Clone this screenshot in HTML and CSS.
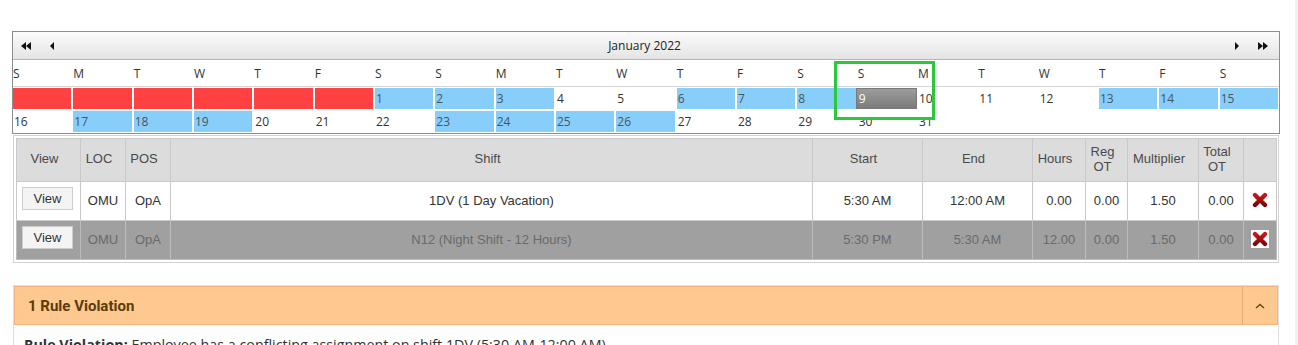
FILE: index.html
```html
<!DOCTYPE html>
<html>
<head>
<meta charset="utf-8">
<title>Schedule</title>
<link rel="stylesheet" href="styles.css">
</head>
<body>
<div class="page">
  <div class="cal">
    <div class="cal-head">
      <div class="nav nav-left">
        <span class="nav-btn"><svg width="11" height="8" viewBox="0 0 11 8"><polygon points="5,0 0,4 5,8"/><polygon points="10,0 5,4 10,8"/></svg></span>
        <span class="nav-btn"><svg width="5" height="8" viewBox="0 0 5 8"><polygon points="4,0 0,4 4,8"/></svg></span>
      </div>
      <div class="cal-title">January 2022</div>
      <div class="nav nav-right">
        <span class="nav-btn"><svg width="5" height="8" viewBox="0 0 5 8"><polygon points="1,0 5,4 1,8"/></svg></span>
        <span class="nav-btn"><svg width="11" height="8" viewBox="0 0 11 8"><polygon points="1,0 6,4 1,8"/><polygon points="6,0 11,4 6,8"/></svg></span>
      </div>
    </div>
    <div class="dow">
      <div>S</div><div>M</div><div>T</div><div>W</div><div>T</div><div>F</div><div>S</div>
      <div>S</div><div>M</div><div>T</div><div>W</div><div>T</div><div>F</div><div>S</div>
      <div>S</div><div>M</div><div>T</div><div>W</div><div>T</div><div>F</div><div>S</div>
    </div>
    <div class="days">
      <div class="day off"></div><div class="day off"></div><div class="day off"></div><div class="day off"></div><div class="day off"></div><div class="day off"></div>
      <div class="day sched">1</div><div class="day sched">2</div><div class="day sched">3</div>
      <div class="day">4</div><div class="day">5</div>
      <div class="day sched">6</div><div class="day sched">7</div><div class="day sched">8</div>
      <div class="day sel">9</div>
      <div class="day">10</div><div class="day">11</div><div class="day">12</div>
      <div class="day sched">13</div><div class="day sched">14</div><div class="day sched">15</div>
      <div class="day">16</div>
      <div class="day sched">17</div><div class="day sched">18</div><div class="day sched">19</div>
      <div class="day">20</div><div class="day">21</div><div class="day">22</div>
      <div class="day sched">23</div><div class="day sched">24</div><div class="day sched">25</div><div class="day sched">26</div>
      <div class="day">27</div><div class="day">28</div><div class="day">29</div><div class="day">30</div><div class="day">31</div>
      <div class="day"></div><div class="day"></div><div class="day"></div><div class="day"></div><div class="day"></div>
    </div>
    <div class="highlight"></div>
  </div>

  <div class="grid-wrap">
    <table class="grid">
      <colgroup>
        <col class="c-view"><col class="c-loc"><col class="c-pos"><col class="c-shift"><col class="c-start"><col class="c-end"><col class="c-hours"><col class="c-reg"><col class="c-mult"><col class="c-total"><col class="c-del">
      </colgroup>
      <thead>
        <tr class="head">
          <th>View</th><th>LOC</th><th>POS</th><th>Shift</th><th>Start</th><th>End</th><th>Hours</th><th>Reg<br>OT</th><th>Multiplier</th><th>Total<br>OT</th><th></th>
        </tr>
      </thead>
      <tbody>
        <tr class="row">
          <td><button class="btn">View</button></td><td>OMU</td><td>OpA</td><td>1DV (1 Day Vacation)</td><td>5:30 AM</td><td>12:00 AM</td><td>0.00</td><td>0.00</td><td>1.50</td><td>0.00</td>
          <td><span class="del"><svg width="16" height="16" viewBox="0 0 16 16"><defs><linearGradient id="xg1" x1="0" y1="0" x2="0" y2="1"><stop offset="0" stop-color="#c81818"/><stop offset="1" stop-color="#7c0808"/></linearGradient></defs><path d="M3 3 L13 13 M13 3 L3 13" stroke="url(#xg1)" stroke-width="4.4" stroke-linecap="round"/></svg></span></td>
        </tr>
        <tr class="row alt">
          <td><button class="btn">View</button></td><td>OMU</td><td>OpA</td><td>N12 (Night Shift - 12 Hours)</td><td>5:30 PM</td><td>5:30 AM</td><td>12.00</td><td>0.00</td><td>1.50</td><td>0.00</td>
          <td><span class="del boxed"><svg width="16" height="16" viewBox="0 0 16 16"><defs><linearGradient id="xg2" x1="0" y1="0" x2="0" y2="1"><stop offset="0" stop-color="#c81818"/><stop offset="1" stop-color="#7c0808"/></linearGradient></defs><path d="M3 3 L13 13 M13 3 L3 13" stroke="url(#xg2)" stroke-width="4.4" stroke-linecap="round"/></svg></span></td>
        </tr>
      </tbody>
    </table>
  </div>

  <div class="panel">
    <div class="panel-head">
      <div class="panel-title">1 Rule Violation</div>
      <div class="panel-toggle"><svg width="10" height="6" viewBox="0 0 10 6"><path d="M1 5 L5 1.5 L9 5" fill="none" stroke="#6b4a12" stroke-width="1.6"/></svg></div>
    </div>
    <div class="panel-body"><b>Rule Violation:</b> Employee has a conflicting assignment on shift 1DV (5:30 AM-12:00 AM)</div>
  </div>
</div>
</body>
</html>
```

FILE: styles.css
```css
html, body {
  margin: 0;
  padding: 0;
  overflow: hidden;
  background: #ffffff;
}

.page {
  height: 345px;
  box-sizing: border-box;
  padding-top: 31px;
  border-right: 3px solid #f1f1f1;
  overflow: hidden;
}

/* ---------- calendar ---------- */
.cal {
  position: relative;
  margin-left: 12px;
  width: 1268px;
  box-sizing: border-box;
  border: 1px solid #8d8d8d;
  font-family: "Open Sans", "DejaVu Sans", sans-serif;
  font-size: 12px;
  color: #333333;
}

.cal-head {
  height: 27px;
  display: flex;
  align-items: center;
  padding: 0 11px 0 8px;
  background: linear-gradient(#fcfcfc, #e4e4e4);
  border-bottom: 1px solid #b4b4b4;
}

.nav {
  flex: 1;
  display: flex;
  align-items: center;
  gap: 18px;
}

.nav-right {
  justify-content: flex-end;
}

.nav-btn {
  display: flex;
  align-items: center;
}

.nav-btn svg {
  display: block;
  fill: #111111;
}

.cal-title {
  color: #222222;
}

.dow {
  display: grid;
  grid-template-columns: repeat(21, 1fr);
  column-gap: 2px;
  padding-right: 1px;
  height: 26px;
  align-items: center;
  border-bottom: 1px solid #d4d4d4;
}

.days {
  display: grid;
  grid-template-columns: repeat(21, 1fr);
  grid-auto-rows: 21px;
  column-gap: 2px;
  row-gap: 2px;
  padding: 1px 1px 1px 0;
}

.day {
  line-height: 21px;
  padding-left: 1px;
  color: #333333;
}

.day.off {
  background: #ff4141;
}

.day.sched {
  background: #87cefa;
  color: #4a5560;
}

.day.sel {
  margin: 0 -1px 0 -2px;
  padding-left: 2px;
  background: linear-gradient(#9c9c9c, #7b7b7b);
  border: 1px solid #7a7a7a;
  box-sizing: border-box;
  line-height: 19px;
  color: #ffffff;
}

.highlight {
  position: absolute;
  left: 821px;
  top: 29px;
  width: 101px;
  height: 59px;
  box-sizing: border-box;
  border: 3px solid #2cc83c;
  pointer-events: none;
}

/* ---------- grid ---------- */
.grid-wrap {
  margin: 1px 0 0 13px;
  width: 1266px;
  box-sizing: border-box;
  border: 1px solid #d2d2d2;
  padding: 2px;
}

.grid {
  width: 1260px;
  table-layout: fixed;
  border-collapse: collapse;
  font-family: "Liberation Sans", Arial, sans-serif;
  font-size: 13px;
  color: #333333;
}

.c-view { width: 64px; }
.c-loc { width: 45px; }
.c-pos { width: 45px; }
.c-shift { width: 642px; }
.c-start { width: 110px; }
.c-end { width: 110px; }
.c-hours { width: 53px; }
.c-reg { width: 42px; }
.c-mult { width: 71px; }
.c-total { width: 45px; }
.c-del { width: 33px; }

.grid th,
.grid td {
  border: 1px solid #c9c9c9;
  padding: 0;
  text-align: center;
  vertical-align: middle;
}

.grid td {
  padding-bottom: 2px;
}

.grid tr.head {
  height: 43px;
}

.grid th {
  background: #dcdcdc;
  color: #4a4a4a;
  font-weight: normal;
  line-height: 15px;
  padding: 0 12px 3px 4px;
}

.grid tr.row {
  height: 39px;
}

.grid tr.alt td {
  background: #a0a0a0;
  color: #6a6a6a;
  border-color: #bcbcbc;
}

.btn {
  display: block;
  margin: 0 auto;
  width: 51px;
  height: 23px;
  padding: 0;
  border: 1px solid #cdcdcd;
  background: #f4f4f4;
  font-family: "Liberation Sans", Arial, sans-serif;
  font-size: 13px;
  color: #333333;
  position: relative;
  left: -1px;
  top: -2px;
}

.del {
  display: inline-flex;
  width: 18px;
  height: 18px;
  align-items: center;
  justify-content: center;
  vertical-align: middle;
}

.del.boxed {
  background: #ffffff;
}

.del svg {
  display: block;
}

/* ---------- panel ---------- */
.panel {
  margin: 22px 0 0 13px;
  width: 1266px;
  box-sizing: border-box;
  border: 1px solid #dedede;
}

.panel-head {
  display: flex;
  height: 39px;
  box-sizing: border-box;
  background: #fec990;
  border: 1px solid #f3b383;
}

.panel-title {
  flex: 1;
  display: flex;
  align-items: center;
  padding-left: 13px;
  font-family: Roboto, "Liberation Sans", sans-serif;
  font-weight: bold;
  font-size: 15px;
  color: #5a3b0b;
}

.panel-toggle {
  width: 34px;
  display: flex;
  align-items: center;
  justify-content: center;
  border-left: 1px solid #e2ad78;
}

.panel-toggle svg {
  display: block;
}

.panel-body {
  padding: 10px 10px 0;
  font-family: "Open Sans", "DejaVu Sans", sans-serif;
  font-size: 14.3px;
  color: #333333;
}
```
